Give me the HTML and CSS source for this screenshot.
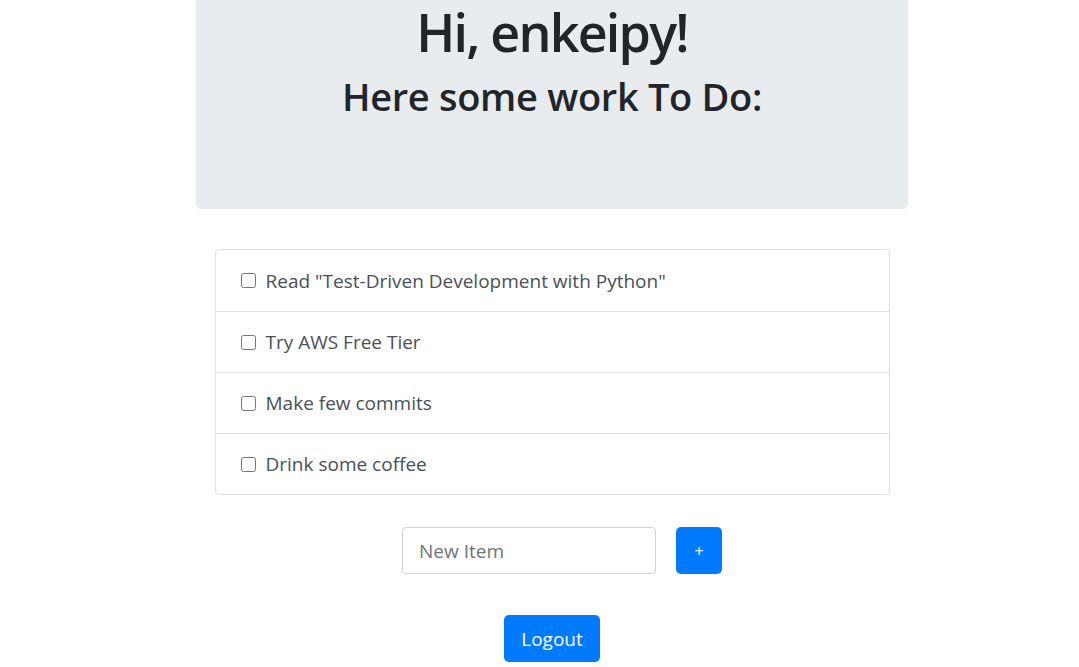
FILE: index.html
```html
<!DOCTYPE html>
<html lang="en">
<head>
<meta charset="utf-8">
<title>To Do</title>
<link rel="stylesheet" href="styles.css">
</head>
<body>
<div class="page">
  <header class="jumbotron">
    <h1 class="greet">Hi, enkeipy!</h1>
    <h2 class="sub">Here some work To Do:</h2>
  </header>
  <ul class="list-group">
    <li class="list-item"><input type="checkbox" class="check"><span>Read "Test-Driven Development with Python"</span></li>
    <li class="list-item"><input type="checkbox" class="check"><span>Try AWS Free Tier</span></li>
    <li class="list-item"><input type="checkbox" class="check"><span>Make few commits</span></li>
    <li class="list-item"><input type="checkbox" class="check"><span>Drink some coffee</span></li>
  </ul>
  <form class="add-form">
    <input type="text" class="new-item" placeholder="New Item">
    <button type="button" class="btn btn-add">+</button>
  </form>
  <div class="logout-row">
    <button type="button" class="btn btn-logout">Logout</button>
  </div>
</div>
</body>
</html>
```

FILE: styles.css
```css
* { box-sizing: border-box; }
html, body { margin: 0; padding: 0; background: #fff; }
body {
  font-family: "Open Sans", "Noto Sans", sans-serif;
  color: #212529;
}
.page {
  padding-left: 25px;
  display: flex;
  flex-direction: column;
  align-items: center;
}
.jumbotron {
  width: 712px;
  background: #e9ecef;
  border-radius: 0 0 5px 5px;
  padding: 1px 0 89px;
  text-align: center;
}
.greet {
  margin: 0;
  font-size: 52px;
  line-height: 62px;
  font-weight: 600;
  letter-spacing: -1.8px;
}
.sub {
  margin: 9px 0 0;
  font-size: 38px;
  line-height: 48px;
  font-weight: 600;
  letter-spacing: -0.3px;
}
.list-group {
  list-style: none;
  margin: 40px 0 0;
  padding: 0;
  width: 675px;
  border: 1px solid #dfdfdf;
  border-radius: 4px;
}
.list-item {
  display: flex;
  align-items: center;
  gap: 10px;
  height: 61px;
  padding: 0 25px;
  font-size: 19px;
  color: #495057;
  border-top: 1px solid #dfdfdf;
}
.list-item:first-child { border-top: 0; }
.check {
  margin: 0;
  width: 15px;
  height: 15px;
  flex: none;
}
.add-form {
  display: flex;
  gap: 20px;
  margin-top: 32px;
  padding-left: 20px;
}
.new-item {
  width: 254px;
  height: 47px;
  padding: 0 16px;
  border: 1px solid #ced4da;
  border-radius: 4px;
  font-family: inherit;
  font-size: 19px;
  color: #495057;
}
.new-item::placeholder { color: #6c757d; }
.btn {
  border: 0;
  background: #007bff;
  color: #fff;
  font-family: inherit;
  border-radius: 5px;
  height: 47px;
  cursor: pointer;
}
.btn-add {
  width: 46px;
  font-size: 16px;
  padding: 0;
}
.logout-row { margin-top: 41px; }
.btn-logout {
  width: 96px;
  font-size: 19px;
  padding: 0;
}
```
